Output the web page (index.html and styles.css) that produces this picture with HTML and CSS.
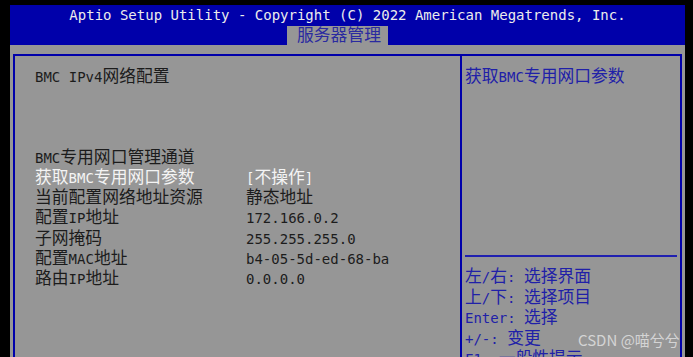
FILE: index.html
```html
<!DOCTYPE html>
<html lang="zh-CN">
<head>
  <meta charset="UTF-8">
  <title>Aptio Setup Utility</title>
  <link rel="stylesheet" href="styles.css">
</head>
<body>
  <div class="screen">
    <div class="header">
      <div class="title">Aptio Setup Utility - Copyright (C) 2022 American Megatrends, Inc.</div>
      <div class="tabs"><span class="tab"><span class="zh">服务器管理</span></span></div>
    </div>
    <div class="main">
      <div class="frame">
        <div class="left">
          <div class="row"><span>BMC IPv4<span class="zh">网络配置</span></span></div>
          <div class="row"></div>
          <div class="row"></div>
          <div class="row"></div>
          <div class="row"><span>BMC<span class="zh">专用网口管理通道</span></span></div>
          <div class="row active"><span><span class="zh">获取</span>BMC<span class="zh">专用网口参数</span></span><span>[<span class="zh">不操作</span>]</span></div>
          <div class="row"><span class="zh">当前配置网络地址资源</span><span class="zh">静态地址</span></div>
          <div class="row"><span><span class="zh">配置</span>IP<span class="zh">地址</span></span><span>172.166.0.2</span></div>
          <div class="row"><span class="zh">子网掩码</span><span>255.255.255.0</span></div>
          <div class="row"><span><span class="zh">配置</span>MAC<span class="zh">地址</span></span><span>b4-05-5d-ed-68-ba</span></div>
          <div class="row"><span><span class="zh">路由</span>IP<span class="zh">地址</span></span><span>0.0.0.0</span></div>
        </div>
        <div class="right">
          <div class="help">
            <div class="line"><span class="zh">获取</span>BMC<span class="zh">专用网口参数</span></div>
          </div>
          <div class="sep"></div>
          <div class="keys">
            <div class="line"><span class="zh">左</span>/<span class="zh">右</span>: <span class="zh">选择界面</span></div>
            <div class="line"><span class="zh">上</span>/<span class="zh">下</span>: <span class="zh">选择项目</span></div>
            <div class="line">Enter: <span class="zh">选择</span></div>
            <div class="line">+/-: <span class="zh">变更</span></div>
            <div class="line">F1: <span class="zh">一般性提示</span></div>
          </div>
        </div>
      </div>
    </div>
  </div>
  <div class="watermark">CSDN @喵兮兮</div>
</body>
</html>
```

FILE: styles.css
```css
html, body {
  margin: 0;
  padding: 0;
  height: 100%;
  overflow: hidden;
}
body {
  background: #000;
  font-family: "DejaVu Sans Mono", "Noto Sans CJK SC", monospace;
  font-size: 14px;
}
.zh {
  font-family: "Noto Sans CJK SC", sans-serif;
  font-size: 16.8px;
  line-height: 16px;
}
.screen {
  margin: 5px 8px 0 10px;
}
.header {
  background: #0000aa;
  height: 40px;
}
.title {
  height: 21px;
  line-height: 21px;
  text-align: center;
  color: #ececec;
}
.tabs {
  padding-left: 277px;
  height: 19px;
}
.tab {
  display: inline-block;
  background: #969696;
  color: #2a2aa0;
  height: 19px;
  line-height: 19px;
  padding: 0 7px 0 10px;
}
.main {
  background: #969696;
  padding: 9px 3px 0 3px;
  height: 312px;
  box-sizing: border-box;
}
.frame {
  border: 2px solid #0000aa;
  border-bottom: none;
  display: grid;
  grid-template-columns: 447px 1fr;
  height: 303px;
}
.left {
  border-right: 2px solid #0000aa;
  padding: 11px 0 0 20px;
  color: #1c1c1c;
}
.row {
  display: grid;
  grid-template-columns: 211px 1fr;
  height: 20.2px;
  line-height: 20.2px;
  white-space: nowrap;
}
.row.active {
  color: #f4f4f4;
}
.right {
  color: #2020a8;
}
.help {
  height: 199px;
  box-sizing: border-box;
  padding: 11px 0 0 3px;
}
.line {
  height: 20.5px;
  line-height: 20.5px;
  white-space: nowrap;
}
.sep {
  height: 2px;
  margin: 0 3px;
  background: #2020b0;
}
.keys {
  padding: 10px 0 0 3px;
}
.watermark {
  position: absolute;
  left: 578px;
  top: 330px;
  font-family: "Noto Sans CJK SC", sans-serif;
  font-size: 15px;
  line-height: 20px;
  color: rgba(255, 255, 255, 0.6);
}
```
